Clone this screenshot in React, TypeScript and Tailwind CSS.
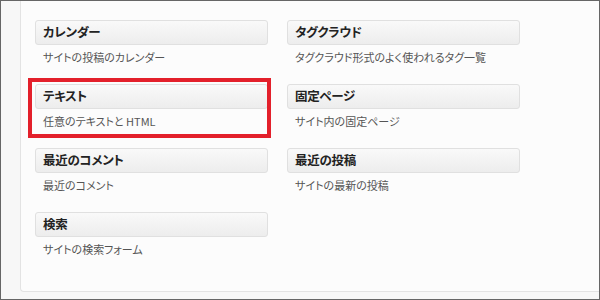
import React from "react";

const widgets: [string, string][] = [
  ["カレンダー", "サイトの投稿のカレンダー"],
  ["タグクラウド", "タグクラウド形式のよく使われるタグ一覧"],
  ["テキスト", "任意のテキストと HTML"],
  ["固定ページ", "サイト内の固定ページ"],
  ["最近のコメント", "最近のコメント"],
  ["最近の投稿", "サイトの最新の投稿"],
  ["検索", "サイトの検索フォーム"],
];

export default function App() {
  return (
    <div
      className="relative w-[600px] h-[300px] overflow-hidden border border-[#666] bg-[#f7f7f7] [font-feature-settings:'palt']"
      style={{ fontFamily: '"Noto Sans CJK JP", "Noto Sans", sans-serif' }}
    >
      <div className="ml-[19px] h-[291px] border-l border-b border-[#e3e3e3] rounded-bl-[4px] bg-[#fcfcfc] pl-[14px] pt-[19px]">
        <div className="grid grid-cols-[233px_233px] gap-x-[19px] gap-y-[19px]">
          {widgets.map(([t, d]) => (
            <div key={t} className="flex flex-col">
              <div className="h-[25px] flex items-center px-[7px] border border-[#e0e0e0] rounded-[3px] bg-gradient-to-b from-[#f9f9f9] to-[#ededed] text-[12.5px] tracking-[-0.3px] font-bold text-[#222] leading-none">
                {t}
              </div>
              <div className="mt-[4px] h-[16px] px-[8px] text-[11px] leading-[16px] text-[#555]">
                {d}
              </div>
            </div>
          ))}
        </div>
      </div>
      <div className="absolute left-[27px] top-[77px] w-[243px] h-[60px] border-[4px] border-[#e3202b]" />
    </div>
  );
}
